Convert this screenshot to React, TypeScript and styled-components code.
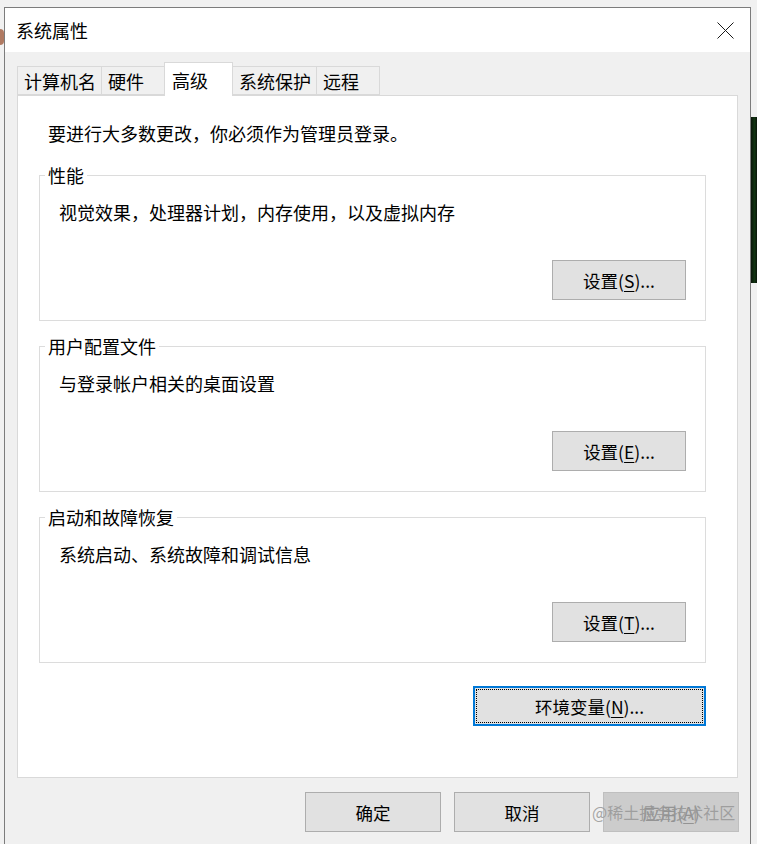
import React from 'react';
import styled, { createGlobalStyle } from 'styled-components';

const GlobalStyle = createGlobalStyle`
  html, body {
    margin: 0;
    padding: 0;
    background: #f0f0f0;
  }
  * {
    box-sizing: border-box;
  }
`;

const FONT = `"Noto Sans CJK SC", "Liberation Sans", sans-serif`;

const Desktop = styled.div`
  display: flex;
  height: 844px;
  overflow: hidden;
  background: #f1f1f1;
  padding-top: 7px;
  font-family: ${FONT};
  color: #000;
`;

const LeftGutter = styled.div`
  width: 4px;
  flex-shrink: 0;
  padding-top: 22px;
`;

const AvatarPeek = styled.div`
  width: 4px;
  height: 16px;
  border-radius: 0 8px 8px 0;
  background: #b07a62;
`;

const RightGutter = styled.div`
  flex: 1;
  padding-top: 110px;
`;

const Terminal = styled.div`
  height: 166px;
  background: linear-gradient(90deg, #0b160b, #123512 60%, #0a150a);
`;

const Window = styled.div`
  width: 747px;
  flex-shrink: 0;
  display: flex;
  flex-direction: column;
  border: 1px solid #7c7c7c;
  border-bottom: none;
  background: #f0f0f0;
`;

const TitleBar = styled.div`
  height: 44px;
  background: #fff;
  display: flex;
  align-items: center;
  justify-content: space-between;
  padding: 0 16px 0 11px;
`;

const Title = styled.div`
  font-size: 18px;
  line-height: 24px;
`;

const Body = styled.div`
  padding: 11px 12px 0 12px;
`;

const TabRow = styled.div`
  display: flex;
  align-items: flex-end;
  height: 33px;
  margin-bottom: -1px;
  position: relative;
  z-index: 1;
`;

const Tab = styled.div<{ $active?: boolean }>`
  height: ${(p) => (p.$active ? '34px' : '29px')};
  min-width: ${(p) => (p.$active ? '69px' : '64px')};
  margin-bottom: ${(p) => (p.$active ? '0' : '1px')};
  padding: 0 5px 0 ${(p) => (p.$active ? '7px' : '6px')};
  display: flex;
  align-items: center;
  font-size: 18px;
  background: ${(p) => (p.$active ? '#fff' : '#f0f0f0')};
  border: 1px solid #d9d9d9;
  border-bottom: ${(p) => (p.$active ? 'none' : '1px solid #d9d9d9')};
  margin-left: -1px;
  &:first-child {
    margin-left: 0;
  }
`;

const Panel = styled.div`
  height: 683px;
  background: #fff;
  border: 1px solid #d9d9d9;
  padding: 25px 31px 0 21px;
  display: flex;
  flex-direction: column;
`;

const Intro = styled.div`
  margin-left: 9px;
  font-size: 18px;
  line-height: 24px;
`;

const Group = styled.fieldset`
  margin: 14px 0 0;
  padding: 0 19px 20px;
  border: 1px solid #dcdcdc;
  min-width: 0;
  &:first-of-type {
    margin-top: 19px;
  }
`;

const Legend = styled.legend`
  margin-left: -14px;
  padding: 0 3px;
  font-size: 18px;
  line-height: 22px;
`;

const Description = styled.div`
  margin-top: 14px;
  font-size: 18px;
  line-height: 24px;
`;

const ButtonLine = styled.div<{ $top: number }>`
  display: flex;
  justify-content: flex-end;
  margin-top: ${(p) => p.$top}px;
`;

const WinButton = styled.button<{ $width: number; $disabled?: boolean }>`
  width: ${(p) => p.$width}px;
  height: 40px;
  padding: 0;
  font-family: ${FONT};
  font-size: 17.5px;
  color: ${(p) => (p.$disabled ? '#939393' : '#000')};
  background: ${(p) => (p.$disabled ? '#cccccc' : '#e1e1e1')};
  border: 1px solid ${(p) => (p.$disabled ? '#bfbfbf' : '#adadad')};
  display: flex;
  align-items: center;
  justify-content: center;
  u {
    text-decoration-thickness: 1px;
    text-underline-offset: 3px;
  }
`;

const FocusButton = styled(WinButton)`
  border: 2px solid #0078d7;
  padding: 1px;
`;

const FocusRing = styled.span`
  flex: 1;
  align-self: stretch;
  display: flex;
  align-items: center;
  justify-content: center;
  border: 1px dotted #000;
`;

const DialogButtons = styled.div`
  display: flex;
  justify-content: flex-end;
  gap: 13px;
  margin-top: 14px;
  margin-right: -1px;
`;

const WatermarkSlot = styled.div`
  position: relative;
`;

const Watermark = styled.span`
  position: absolute;
  left: -11px;
  top: 50%;
  transform: translateY(-50%);
  font-size: 16px;
  white-space: nowrap;
  color: rgba(150, 150, 150, 0.85);
  pointer-events: none;
`;

const CloseIcon = () => (
  <svg width="17" height="17" viewBox="0 0 17 17">
    <path d="M0.5 0.5 L16.5 16.5 M16.5 0.5 L0.5 16.5" stroke="#1a1a1a" strokeWidth="1" fill="none" />
  </svg>
);

const sections = [
  { title: '性能', text: '视觉效果，处理器计划，内存使用，以及虚拟内存', key: 'S' },
  { title: '用户配置文件', text: '与登录帐户相关的桌面设置', key: 'E' },
  { title: '启动和故障恢复', text: '系统启动、系统故障和调试信息', key: 'T' },
];

const tabs = ['计算机名', '硬件', '高级', '系统保护', '远程'];

export default function App() {
  return (
    <>
      <GlobalStyle />
      <Desktop>
        <LeftGutter>
          <AvatarPeek />
        </LeftGutter>
        <Window>
          <TitleBar>
            <Title>系统属性</Title>
            <CloseIcon />
          </TitleBar>
          <Body>
            <TabRow>
              {tabs.map((t) => (
                <Tab key={t} $active={t === '高级'}>
                  {t}
                </Tab>
              ))}
            </TabRow>
            <Panel>
              <Intro>要进行大多数更改，你必须作为管理员登录。</Intro>
              {sections.map((s) => (
                <Group key={s.title}>
                  <Legend>{s.title}</Legend>
                  <Description>{s.text}</Description>
                  <ButtonLine $top={36}>
                    <WinButton $width={134}>
                      设置(<u>{s.key}</u>)...
                    </WinButton>
                  </ButtonLine>
                </Group>
              ))}
              <ButtonLine $top={23}>
                <FocusButton $width={233}>
                  <FocusRing>
                    环境变量(<u>N</u>)...
                  </FocusRing>
                </FocusButton>
              </ButtonLine>
            </Panel>
            <DialogButtons>
              <WinButton $width={136}>确定</WinButton>
              <WinButton $width={136}>取消</WinButton>
              <WatermarkSlot>
                <WinButton $width={136} $disabled>
                  应用(<u>A</u>)
                </WinButton>
                <Watermark>@稀土掘金技术社区</Watermark>
              </WatermarkSlot>
            </DialogButtons>
          </Body>
        </Window>
        <RightGutter>
          <Terminal />
        </RightGutter>
      </Desktop>
    </>
  );
}
